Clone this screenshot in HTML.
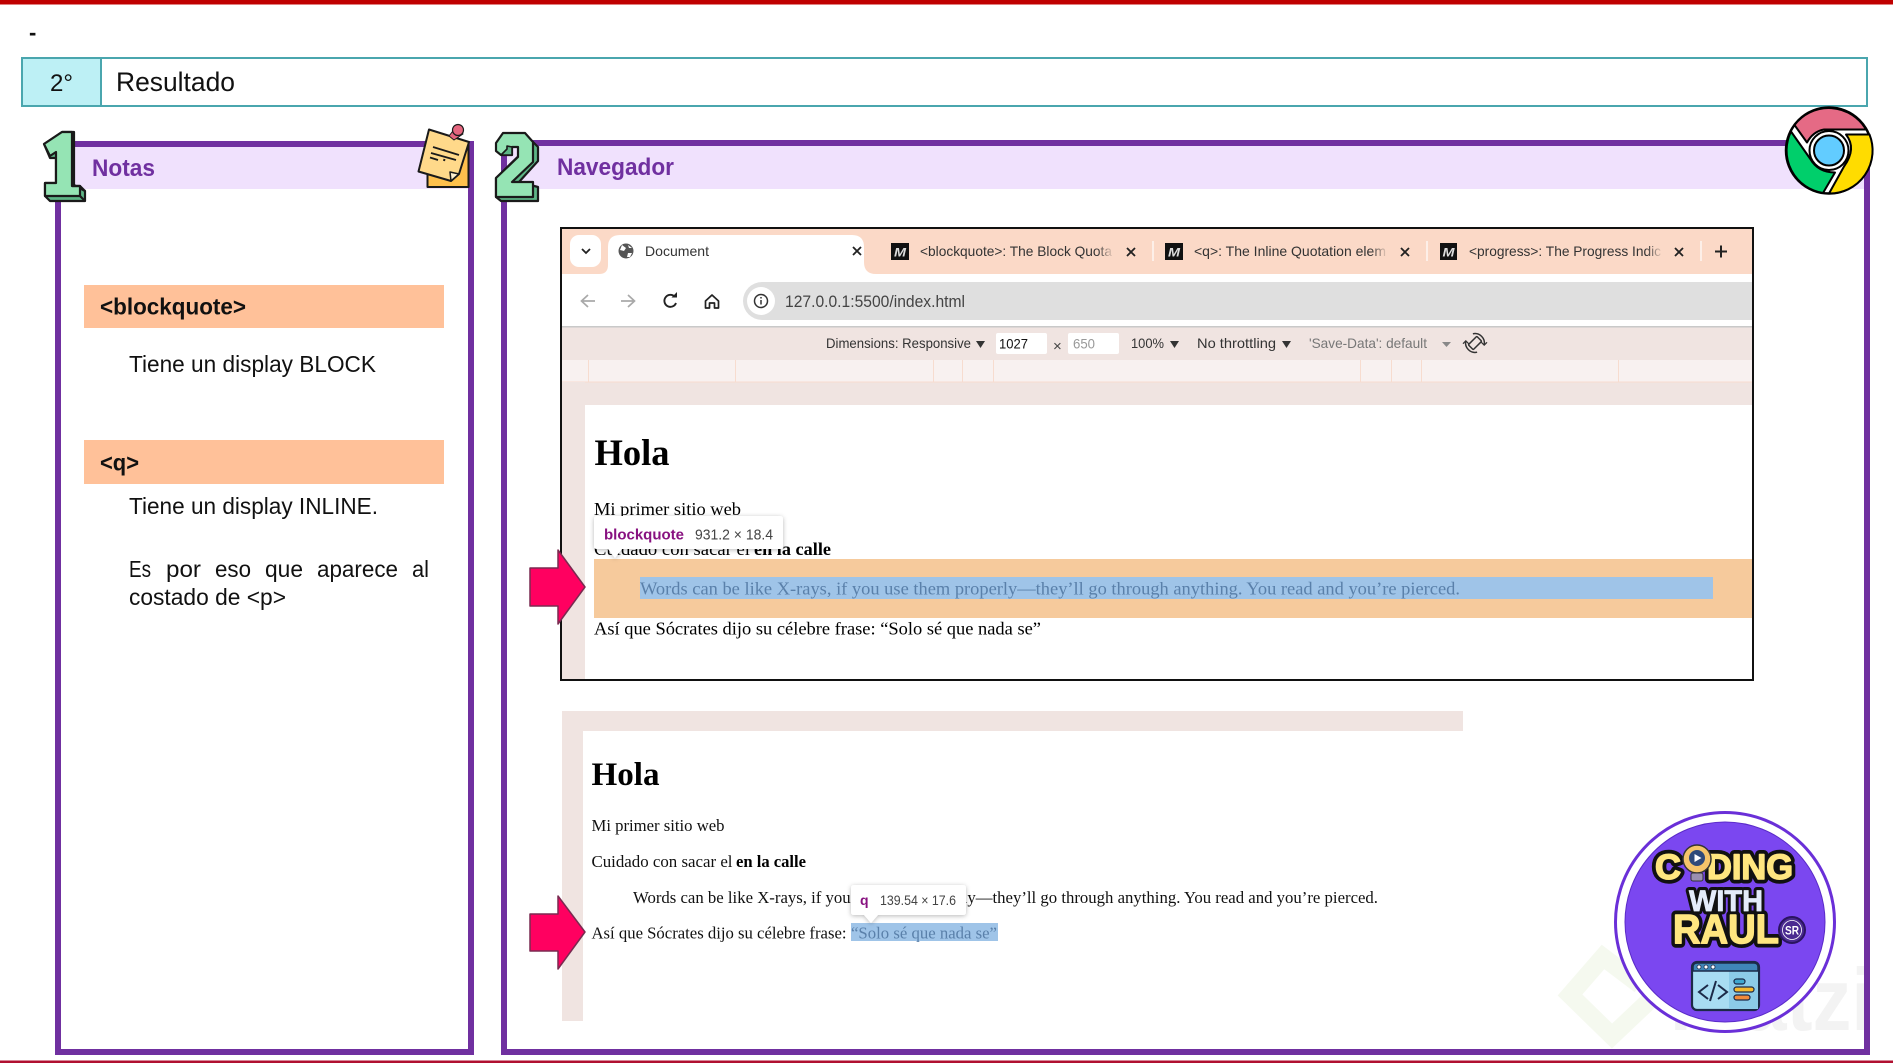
<!DOCTYPE html>
<html lang="es">
<head>
<meta charset="utf-8">
<title>Resultado</title>
<style>
html,body{margin:0;padding:0;background:#fff;width:1893px;height:1063px;overflow:hidden}
svg{display:block}
.s{font-family:"Liberation Sans",sans-serif}
.t{font-family:"Liberation Serif",serif}
</style>
</head>
<body>
<svg xmlns="http://www.w3.org/2000/svg" width="1893" height="1063" viewBox="0 0 1893 1063">
<defs>
<linearGradient id="fade" x1="0" x2="1"><stop offset="0" stop-color="#FBD9C7" stop-opacity="0"/><stop offset="1" stop-color="#FBD9C7"/></linearGradient>
<filter id="sh" x="-20%" y="-30%" width="140%" height="170%"><feDropShadow dx="0" dy="1" stdDeviation="2.5" flood-color="#000" flood-opacity=".28"/></filter>
</defs>
<rect width="1893" height="1063" fill="#fff"/>

<!-- watermark -->
<path d="M1640 985 L1603 957 L1570 995 L1612 1036 L1650 1000" fill="none" stroke="#F5F9EF" stroke-width="18" stroke-linejoin="miter"/>
<text x="1670" y="1030" class="s" font-size="88" font-weight="700" fill="#F3F3F3" textLength="203" lengthAdjust="spacingAndGlyphs">Platzi</text>

<!-- red bars -->
<rect x="0" y="0" width="1893" height="4.5" fill="#C00000"/>
<rect x="0" y="1060.5" width="1893" height="2.5" fill="#B01030"/>

<text x="29" y="40" class="s" font-size="22" font-weight="700" fill="#111">-</text>

<!-- title row -->
<rect x="22" y="58" width="79" height="48" fill="#BDF0F5"/>
<rect x="22" y="58" width="1845" height="48" fill="none" stroke="#4AA6AE" stroke-width="2"/>
<line x1="101" y1="58" x2="101" y2="106" stroke="#4AA6AE" stroke-width="2"/>
<text x="50" y="91" class="s" font-size="24" fill="#111" textLength="23" lengthAdjust="spacingAndGlyphs">2°</text>
<text x="116" y="91" class="s" font-size="27" fill="#111" textLength="119" lengthAdjust="spacingAndGlyphs">Resultado</text>

<!-- Notas panel -->
<rect x="61" y="146" width="407" height="43" fill="#F0E1FD"/>
<rect x="58" y="144" width="413" height="908" fill="none" stroke="#7030A0" stroke-width="6"/>
<text x="92" y="176" class="s" font-size="24" font-weight="700" fill="#7030A0" textLength="63" lengthAdjust="spacingAndGlyphs">Notas</text>

<rect x="84" y="285" width="360" height="43" fill="#FFC199"/>
<text x="100" y="314.500" class="s" font-size="23" font-weight="700" fill="#111" textLength="146" lengthAdjust="spacingAndGlyphs">&lt;blockquote&gt;</text>
<text x="129" y="372" class="s" font-size="23.5" fill="#111" textLength="247" lengthAdjust="spacingAndGlyphs">Tiene un display BLOCK</text>
<rect x="84" y="440" width="360" height="44" fill="#FFC199"/>
<text x="100" y="470.500" class="s" font-size="23" font-weight="700" fill="#111" textLength="39" lengthAdjust="spacingAndGlyphs">&lt;q&gt;</text>
<text x="129" y="514" class="s" font-size="23.5" fill="#111" textLength="249" lengthAdjust="spacingAndGlyphs">Tiene un display INLINE.</text>
<g class="s" font-size="23.5" fill="#111">
<text x="129" y="577" textLength="22" lengthAdjust="spacingAndGlyphs">Es</text>
<text x="166" y="577" textLength="35" lengthAdjust="spacingAndGlyphs">por</text>
<text x="215" y="577" textLength="36" lengthAdjust="spacingAndGlyphs">eso</text>
<text x="265" y="577" textLength="38" lengthAdjust="spacingAndGlyphs">que</text>
<text x="317" y="577" textLength="81" lengthAdjust="spacingAndGlyphs">aparece</text>
<text x="412" y="577" textLength="17" lengthAdjust="spacingAndGlyphs">al</text>
<text x="129" y="605" textLength="157" lengthAdjust="spacingAndGlyphs">costado de &lt;p&gt;</text>
</g>

<!-- Navegador panel -->
<rect x="507" y="146" width="1357" height="43" fill="#F0E1FD"/>
<rect x="504" y="143" width="1363" height="909" fill="none" stroke="#7030A0" stroke-width="6"/>
<text x="557" y="175" class="s" font-size="24" font-weight="700" fill="#7030A0" textLength="117" lengthAdjust="spacingAndGlyphs">Navegador</text>

<!-- Number 1 -->
<g stroke="#1a1a1a" stroke-width="2.2" stroke-linejoin="round">
<path d="M44 144 L62 132 L74 132 L74 185 L85 191 L85 201 L50 201 L45 196 L45 183 L56 183 L56 158 L50 158 Z" fill="#5DB586"/>
<path d="M44 144 L62 132 L72 132 L72 186 L80 186 L80 196 L45 196 L45 183 L56 183 L56 152 L50 156 Z" fill="#95E4B4"/>
<path d="M72 186 L80 186 L85 191 M80 196 L85 201" fill="none"/>
</g>
<!-- Number 2 -->
<g stroke="#1a1a1a" stroke-width="2.2" stroke-linejoin="round">
<path d="M533 142 L538 147 L538 161 L519 182 L538 187 L538 201 L501 201 L496 197 L496 178 L533 142 Z" fill="#5DB586"/>
<path d="M496 143 L503 133 L525 133 L533 142 L533 162 L512 182 L533 182 L533 197 L496 197 L496 178 L518 157 L518 147 L512 147 L512 155 L501 155 L496 151 Z" fill="#95E4B4"/>
<path d="M501 155 L507 149 L507 146 L512 147 L512 155 Z" fill="#5DB586" stroke-width="1.600"/>
</g>

<!-- Note icon -->
<g stroke="#1a1a1a" stroke-linejoin="round">
<rect x="427.5" y="145" width="41" height="42" fill="#FFC04D" stroke-width="2"/>
<path d="M429 129.500 L469 142 L459 174 L451 181 L418.500 171.500 Z" fill="#FFD98A" stroke-width="2"/>
<path d="M450 172 L459 174 L451 181 Z" fill="#FFF0CF" stroke-width="1.500"/>
<path d="M433 147 L459 155 M431 153 L456 160 M430 157.500 L438 160" fill="none" stroke-width="1.800"/>
<path d="M444 161 L444.500 159" fill="none" stroke-width="2"/>
<path d="M449 136 L456 127 L463 134 L454 140 Z" fill="#E5667F" stroke-width="1"/>
<circle cx="458" cy="130" r="5.500" fill="#E5667F" stroke-width="1.200"/>
</g>

<!-- Chrome logo -->
<g transform="translate(1829 150.500)">
<circle r="43" fill="#fff" stroke="#000" stroke-width="2.500"/>
<path d="M-34.500 -25.500 A43 43 0 0 1 37 -21 L-5 -21 Q-16 -19 -22 -8 Z" fill="#E56A85" stroke="#000" stroke-width="2" stroke-linejoin="round"/>
<path d="M-38 -19 A43 43 0 0 0 -6 42.500 L6 22 Q-11 22 -19 8 Z" fill="#00CF6B" stroke="#000" stroke-width="2" stroke-linejoin="round"/>
<path d="M17 -16 L40.500 -16 A43 43 0 0 1 0 43 L15 16 Q28 -2 17 -16 Z" fill="#FFDC00" stroke="#000" stroke-width="2" stroke-linejoin="round"/>
<circle r="19.500" fill="#fff" stroke="#000" stroke-width="2"/>
<circle r="15" fill="#62CCFF" stroke="#000" stroke-width="2"/>
</g>

<!-- Browser 1 -->
<rect x="561" y="228" width="1192" height="452" fill="#fff" stroke="#111" stroke-width="2"/>
<rect x="562" y="229" width="1190" height="45" fill="#FBD9C7"/>
<rect x="562" y="274" width="1190" height="53" fill="#fff"/>
<rect x="570" y="235" width="31" height="32" rx="9" fill="#fff"/>
<path d="M582 249 L586 253 L590 249" fill="none" stroke="#222" stroke-width="1.800"/>
<path d="M599 274 Q608 274 608 265 L608 247 Q608 235 620 235 L852 235 Q864 235 864 247 L864 262 Q864 274 876 274 Z" fill="#fff"/>
<circle cx="626" cy="251" r="7.500" fill="#555"/>
<path d="M622 245 L626 248 L624 251 L620 250 Z M628 253 L632 253 L630 257 L627 257 Z M628 245 L632 248 L629 248 Z" fill="#fff"/>
<text x="645" y="256" class="s" font-size="14" fill="#333" textLength="64" lengthAdjust="spacingAndGlyphs">Document</text>
<path d="M853 247 L861 255 M861 247 L853 255" stroke="#222" stroke-width="1.800"/>

<g class="s">
<rect x="891" y="243" width="18" height="17" fill="#111"/><text x="894" y="256.500" font-size="12" font-style="italic" font-weight="700" fill="#ddd" textLength="12" lengthAdjust="spacingAndGlyphs">M</text>
<text x="920" y="256" font-size="14" fill="#333" textLength="192" lengthAdjust="spacingAndGlyphs">&lt;blockquote&gt;: The Block Quota</text>
<rect x="1097" y="240" width="17" height="22" fill="url(#fade)"/>
<path d="M1127 248 L1135 256 M1135 248 L1127 256" stroke="#222" stroke-width="1.800"/>
<rect x="1152" y="241" width="2" height="20" fill="#FDEFE8"/>

<rect x="1165" y="243" width="18" height="17" fill="#111"/><text x="1168" y="256.500" font-size="12" font-style="italic" font-weight="700" fill="#ddd" textLength="12" lengthAdjust="spacingAndGlyphs">M</text>
<text x="1194" y="256" font-size="14" fill="#333" textLength="192" lengthAdjust="spacingAndGlyphs">&lt;q&gt;: The Inline Quotation elem</text>
<rect x="1371" y="240" width="17" height="22" fill="url(#fade)"/>
<path d="M1401 248 L1409 256 M1409 248 L1401 256" stroke="#222" stroke-width="1.800"/>
<rect x="1426" y="241" width="2" height="20" fill="#FDEFE8"/>

<rect x="1440" y="243" width="17" height="17" fill="#111"/><text x="1442.500" y="256.500" font-size="12" font-style="italic" font-weight="700" fill="#ddd" textLength="12" lengthAdjust="spacingAndGlyphs">M</text>
<text x="1469" y="256" font-size="14" fill="#333" textLength="192" lengthAdjust="spacingAndGlyphs">&lt;progress&gt;: The Progress Indic</text>
<rect x="1646" y="240" width="17" height="22" fill="url(#fade)"/>
<path d="M1675 248 L1683 256 M1683 248 L1675 256" stroke="#222" stroke-width="1.800"/>
<rect x="1700" y="241" width="2" height="20" fill="#FDEFE8"/>
<path d="M1715 251.500 L1727 251.500 M1721 245.500 L1721 257.500" stroke="#222" stroke-width="2"/>
</g>

<!-- toolbar -->
<g fill="none" stroke="#A9A9A9" stroke-width="1.700">
<path d="M595 301 L582 301 M588 295 L581.500 301 L588 307"/>
<path d="M621 301 L634 301 M628 295 L634.500 301 L628 307"/>
</g>
<path d="M675 297 A6 6 0 1 0 676 303" fill="none" stroke="#222" stroke-width="1.900"/>
<path d="M671.500 297.500 L677 297.500 L677 292 Z" fill="#222"/>
<path d="M705.500 301 L712 295 L718.500 301 L718.500 308 L714.500 308 L714.500 303 L709.500 303 L709.500 308 L705.500 308 Z" fill="none" stroke="#222" stroke-width="1.700" stroke-linejoin="round"/>
<path d="M762 282 L1752 282 L1752 320 L762 320 A19 19 0 0 1 762 282 Z" fill="#DFDFDF"/>
<circle cx="761" cy="301" r="14" fill="#fff"/>
<circle cx="761" cy="301" r="6.500" fill="none" stroke="#333" stroke-width="1.500"/>
<path d="M761 300 L761 304.500 M761 297 L761 298.500" stroke="#333" stroke-width="1.500"/>
<text x="785" y="307" class="s" font-size="16.500" fill="#444" textLength="180" lengthAdjust="spacingAndGlyphs">127.0.0.1:5500/index.html</text>

<!-- device toolbar -->
<rect x="562" y="326" width="1190" height="1.500" fill="#C9C9C9"/>
<rect x="562" y="327.500" width="1190" height="32.500" fill="#F0E4E1"/>
<g class="s" font-size="14" fill="#333">
<text x="826" y="348" textLength="145" lengthAdjust="spacingAndGlyphs">Dimensions: Responsive</text>
<path d="M976 341 L985 341 L980.500 348 Z" fill="#333"/>
<rect x="996" y="333" width="51" height="21" rx="2" fill="#fff"/>
<text x="999" y="348.500" fill="#111" textLength="29" lengthAdjust="spacingAndGlyphs">1027</text>
<text x="1053" y="351" font-size="15" fill="#444">×</text>
<rect x="1068" y="333" width="51" height="21" rx="2" fill="#fff"/>
<text x="1073" y="348.500" fill="#999" textLength="22" lengthAdjust="spacingAndGlyphs">650</text>
<text x="1131" y="348" textLength="33" lengthAdjust="spacingAndGlyphs">100%</text>
<path d="M1170 341 L1179 341 L1174.500 348 Z" fill="#333"/>
<text x="1197" y="348" textLength="79" lengthAdjust="spacingAndGlyphs">No throttling</text>
<path d="M1282 341 L1291 341 L1286.500 348 Z" fill="#333"/>
<text x="1309" y="348" fill="#777" textLength="118" lengthAdjust="spacingAndGlyphs">'Save-Data': default</text>
<path d="M1442 342 L1451 342 L1446.500 347 Z" fill="#888"/>
</g>
<g transform="rotate(45 1475 343)" fill="none" stroke="#333" stroke-width="1.500">
<rect x="1471.500" y="337" width="7" height="12" rx="1"/>
<path d="M1467 338 A9.500 9.500 0 0 1 1483 338 M1467 348 A9.500 9.500 0 0 0 1483 348"/>
<path d="M1483 334 L1483 338 L1479 338 M1467 352 L1467 348 L1471 348" stroke-width="1.200"/>
</g>

<!-- ruler -->
<rect x="562" y="360" width="1190" height="22" fill="#F8F1F0"/>
<rect x="562" y="382" width="1190" height="23" fill="#F0E4E1"/>
<rect x="562" y="381.500" width="1190" height="1" fill="#F7DCCF"/>
<g fill="#F7DCCF">
<rect x="588" y="360" width="1" height="22"/><rect x="735" y="360" width="1" height="22"/><rect x="933" y="360" width="1" height="22"/><rect x="962" y="360" width="1" height="22"/><rect x="993" y="360" width="1" height="22"/><rect x="1360" y="360" width="1" height="22"/><rect x="1391" y="360" width="1" height="22"/><rect x="1421" y="360" width="1" height="22"/><rect x="1618" y="360" width="1" height="22"/>
</g>
<rect x="562" y="382" width="23" height="297" fill="#F0E4E1"/>

<!-- page 1 -->
<text x="594.500" y="465" class="t" font-size="37" font-weight="700" fill="#000" textLength="75" lengthAdjust="spacingAndGlyphs">Hola</text>
<text x="594" y="515" class="t" font-size="18" fill="#000" textLength="147" lengthAdjust="spacingAndGlyphs">Mi primer sitio web</text>
<text x="594" y="555" class="t" font-size="18" fill="#000" textLength="156" lengthAdjust="spacingAndGlyphs">Cuidado con sacar el</text>
<text x="754" y="555" class="t" font-size="18" font-weight="700" fill="#000" textLength="77" lengthAdjust="spacingAndGlyphs">en la calle</text>
<rect x="594" y="559" width="1158" height="59" fill="#F6CA9C"/>
<rect x="640" y="577" width="1073" height="22" fill="#9FC4E8"/>
<text x="640" y="594.500" class="t" font-size="18" fill="#5A80AA" textLength="820" lengthAdjust="spacingAndGlyphs">Words can be like X-rays, if you use them properly—they’ll go through anything. You read and you’re pierced.</text>
<text x="594" y="634.500" class="t" font-size="18" fill="#000" textLength="447" lengthAdjust="spacingAndGlyphs">Así que Sócrates dijo su célebre frase: “Solo sé que nada se”</text>
<path d="M597 516 L780 516 Q783 516 783 519 L783 546 Q783 549 780 549 L622 549 L615 558 L608 549 L597 549 Q594 549 594 546 L594 519 Q594 516 597 516 Z" fill="#fff" filter="url(#sh)"/>
<text x="604" y="539.500" class="s" font-size="15" font-weight="700" fill="#881280" textLength="80" lengthAdjust="spacingAndGlyphs">blockquote</text>
<text x="695" y="539.500" class="s" font-size="15" fill="#444" textLength="78" lengthAdjust="spacingAndGlyphs">931.2 × 18.4</text>

<!-- arrow 1 -->
<path d="M530 568 L558 568 L558 550 L585 587 L558 624 L558 606 L530 606 Z" fill="#FF0060" stroke="#7A2A50" stroke-width="1.500" stroke-linejoin="round"/>

<!-- page 2 -->
<rect x="562" y="711" width="901" height="20" fill="#F0E4E1"/>
<rect x="562" y="731" width="21" height="290" fill="#F0E4E1"/>
<text x="591.500" y="785" class="t" font-size="33" font-weight="700" fill="#000" textLength="68" lengthAdjust="spacingAndGlyphs">Hola</text>
<text x="591.500" y="831" class="t" font-size="16.400" fill="#111" textLength="133" lengthAdjust="spacingAndGlyphs">Mi primer sitio web</text>
<text x="591.500" y="867" class="t" font-size="16.400" fill="#111" textLength="141" lengthAdjust="spacingAndGlyphs">Cuidado con sacar el</text>
<text x="736" y="867" class="t" font-size="16.400" font-weight="700" fill="#000" textLength="70" lengthAdjust="spacingAndGlyphs">en la calle</text>
<text x="633" y="903" class="t" font-size="16.400" fill="#111" textLength="745" lengthAdjust="spacingAndGlyphs">Words can be like X-rays, if you use them properly—they’ll go through anything. You read and you’re pierced.</text>
<text x="591.500" y="938.500" class="t" font-size="16.400" fill="#111" textLength="255" lengthAdjust="spacingAndGlyphs">Así que Sócrates dijo su célebre frase:</text>
<rect x="851" y="923" width="147" height="18" fill="#9FC4E8"/>
<text x="851" y="938.500" class="t" font-size="16.400" fill="#5A80AA" textLength="146" lengthAdjust="spacingAndGlyphs">“Solo sé que nada se”</text>
<path d="M854 885 L963 885 Q966 885 966 888 L966 912 Q966 915 963 915 L878 915 L871 923 L864 915 L854 915 Q851 915 851 912 L851 888 Q851 885 854 885 Z" fill="#fff" filter="url(#sh)"/>
<text x="860" y="905" class="s" font-size="14" font-weight="700" fill="#881280">q</text>
<text x="880" y="905" class="s" font-size="13.500" fill="#444" textLength="76" lengthAdjust="spacingAndGlyphs">139.54 × 17.6</text>

<!-- arrow 2 -->
<path d="M530 914 L558 914 L558 896 L585 932 L558 969 L558 951 L530 951 Z" fill="#FF0060" stroke="#7A2A50" stroke-width="1.500" stroke-linejoin="round"/>

<!-- logo -->
<circle cx="1725" cy="922" r="109.500" fill="#fff" stroke="#6A2FD8" stroke-width="3"/>
<circle cx="1725" cy="922" r="100" fill="#7B47F0" stroke="#5A2AC8" stroke-width="1"/>
<g class="s" font-weight="700" stroke-linejoin="round" paint-order="stroke fill">
<g stroke="#111" fill="#111">
<text x="1655" y="879" font-size="35" stroke-width="9" textLength="26" lengthAdjust="spacingAndGlyphs">C</text>
<text x="1707" y="879" font-size="35" stroke-width="9" textLength="86" lengthAdjust="spacingAndGlyphs">DING</text>
<text x="1689" y="911" font-size="30" stroke-width="7" textLength="74" lengthAdjust="spacingAndGlyphs">WITH</text>
<text x="1673" y="943" font-size="41" stroke-width="9" textLength="106" lengthAdjust="spacingAndGlyphs">RAUL</text>
</g>
<text x="1655" y="879" font-size="35" fill="#FFE680" stroke="#FFE680" stroke-width="1.500" textLength="26" lengthAdjust="spacingAndGlyphs">C</text>
<text x="1707" y="879" font-size="35" fill="#FFE680" stroke="#FFE680" stroke-width="1.500" textLength="86" lengthAdjust="spacingAndGlyphs">DING</text>
<text x="1689" y="911" font-size="30" fill="#E4ECFA" stroke="#E4ECFA" stroke-width=".8" textLength="74" lengthAdjust="spacingAndGlyphs">WITH</text>
<text x="1673" y="943" font-size="41" fill="#FFE680" stroke="#FFE680" stroke-width="1.500" textLength="106" lengthAdjust="spacingAndGlyphs">RAUL</text>
</g>
<circle cx="1697" cy="859" r="14" fill="#F5C46A" stroke="#333" stroke-width="1.500"/>
<circle cx="1697" cy="858" r="8" fill="#2F4A7A"/>
<path d="M1694.500 854 L1701.500 858 L1694.500 862 Z" fill="#fff"/>
<rect x="1691" y="873" width="12" height="8" rx="2" fill="#9A8FB0" stroke="#333" stroke-width="1"/>
<circle cx="1792" cy="930" r="13" fill="#4A2A90" stroke="#2a1460" stroke-width="2"/>
<circle cx="1792" cy="930" r="9.500" fill="none" stroke="#fff" stroke-width=".8"/>
<text x="1785" y="934.500" class="s" font-size="11.500" font-weight="700" fill="#fff" textLength="14" lengthAdjust="spacingAndGlyphs">SR</text>
<g>
<rect x="1692" y="962" width="67" height="48" rx="5" fill="#A8DCF2" stroke="#1C2A48" stroke-width="2.200"/>
<rect x="1729" y="971" width="29" height="38" fill="#8CCBE8"/>
<path d="M1693 971 L1693 967 Q1693 963 1697 963 L1754 963 Q1758 963 1758 967 L1758 971 Z" fill="#3F86B8" stroke="#1C2A48" stroke-width="1.500"/>
<circle cx="1699" cy="967" r="2" fill="#fff" stroke="#1C2A48" stroke-width=".8"/><circle cx="1706" cy="967" r="2" fill="#fff" stroke="#1C2A48" stroke-width=".8"/><circle cx="1713" cy="967" r="2" fill="#fff" stroke="#1C2A48" stroke-width=".8"/>
<path d="M1708 985 L1699 992 L1708 999 M1716 981 L1710 1001 M1718 985 L1727 992 L1718 999" fill="none" stroke="#1C2A48" stroke-width="2"/>
<rect x="1734" y="979" width="11" height="5" rx="2.500" fill="#3FA8D0" stroke="#1C2A48" stroke-width="1.200"/>
<rect x="1734" y="987" width="20" height="5" rx="2.500" fill="#F5B82E" stroke="#1C2A48" stroke-width="1.200"/>
<rect x="1734" y="995" width="16" height="5" rx="2.500" fill="#F08A3C" stroke="#1C2A48" stroke-width="1.200"/>
</g>
</svg>
</body>
</html>
